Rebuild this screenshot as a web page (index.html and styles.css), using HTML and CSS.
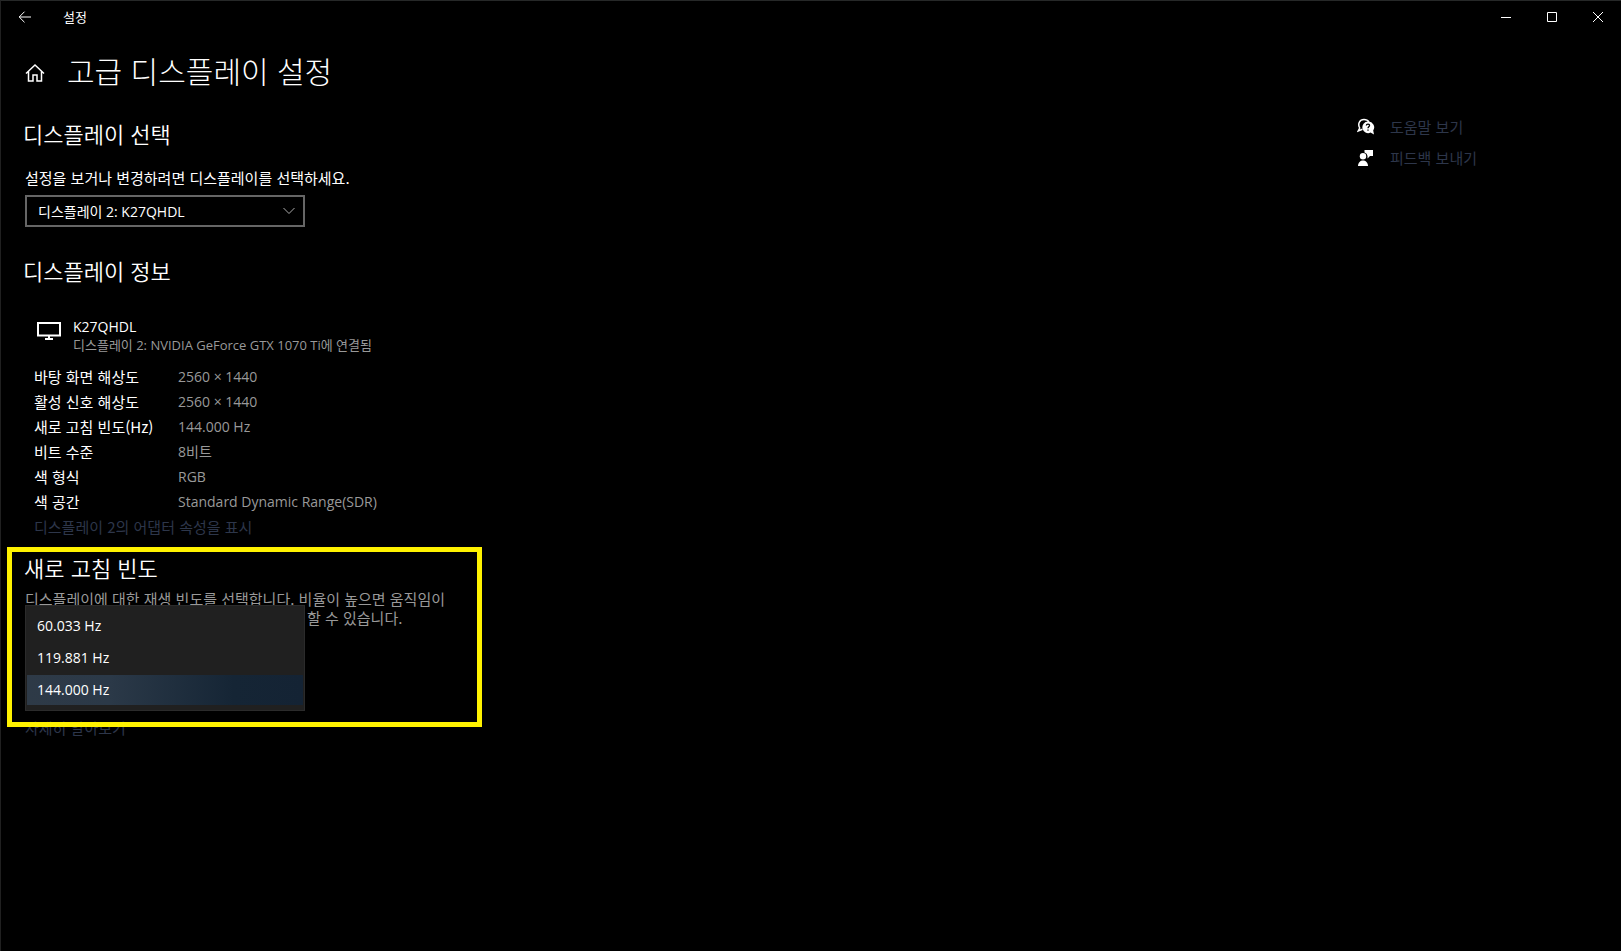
FILE: index.html
```html
<!DOCTYPE html>
<html lang="ko">
<head>
	<meta charset="UTF-8">
	<title>설정</title>
	<link rel="stylesheet" href="styles.css">
</head>
<body>

	<div class="window">
		<div class="titlebar">
			<button class="back" aria-label="뒤로">
				<svg width="14" height="12" viewBox="0 0 14 12"><path d="M6.5 .7L1.2 6l5.300 5.300M1.200 6H13"/></svg>
			</button>
			<span class="app-name">설정</span>
			<div class="controls">
				<button aria-label="최소화"><svg width="10" height="10" viewBox="0 0 10 10"><path d="M0 5.500h10"/></svg></button>
				<button aria-label="최대화"><svg width="10" height="10" viewBox="0 0 10 10"><path d="M.5.5h9v9h-9z"/></svg></button>
				<button aria-label="닫기"><svg width="10" height="10" viewBox="0 0 10 10"><path d="M0 0l10 10M10 0L0 10"/></svg></button>
			</div>
		</div>

		<header class="page-head">
			<a href="#" class="home" aria-label="홈">
				<svg width="20" height="20" viewBox="0 0 20 20"><path d="M1 10.500L10 2l9 8.500M3.500 8.500v9.500h4.500v-6h4v6h4.500V8.500"/></svg>
			</a>
			<h1>고급 디스플레이 설정</h1>
		</header>

		<div class="content">
			<main>
				<section class="pick">
					<h2>디스플레이 선택</h2>
					<label for="display">설정을 보거나 변경하려면 디스플레이를 선택하세요.</label>
					<div class="combo">
						<select id="display">
							<option>디스플레이 2: K27QHDL</option>
						</select>
						<svg class="chevron" width="12" height="8" viewBox="0 0 12 8"><path d="M.5 1L6 6.500 11.500 1"/></svg>
					</div>
				</section>

				<section class="info">
					<h2>디스플레이 정보</h2>
					<div class="device">
						<svg width="24" height="18" viewBox="0 0 24 18"><path d="M1 1h22v12.500H1zM12 13.500V17M8 17h8"/></svg>
						<div>
							<div class="name">K27QHDL</div>
							<div class="adapter">디스플레이 2: NVIDIA GeForce GTX 1070 Ti에 연결됨</div>
						</div>
					</div>
					<dl class="props">
						<dt>바탕 화면 해상도</dt><dd>2560 × 1440</dd>
						<dt>활성 신호 해상도</dt><dd>2560 × 1440</dd>
						<dt>새로 고침 빈도(Hz)</dt><dd>144.000 Hz</dd>
						<dt>비트 수준</dt><dd>8비트</dd>
						<dt>색 형식</dt><dd>RGB</dd>
						<dt>색 공간</dt><dd>Standard Dynamic Range(SDR)</dd>
					</dl>
					<a href="#" class="adapter-link">디스플레이 2의 어댑터 속성을 표시</a>
				</section>

				<section class="rate">
					<h2>새로 고침 빈도</h2>
					<p>디스플레이에 대한 재생 빈도를 선택합니다. 비율이 높으면 움직임이<br>더 부드럽게 표시되지만, 전원도 더 많이 사용 할 수 있습니다.</p>
					<div class="rate-field">
						<select size="3" class="popup" aria-label="새로 고침 빈도">
							<option>60.033 Hz</option>
							<option>119.881 Hz</option>
							<option selected>144.000 Hz</option>
						</select>
					</div>
				</section>
				<a href="#" class="more">자세히 알아보기</a>
			</main>

			<aside class="help">
				<a href="#">
					<svg width="18" height="18" viewBox="0 0 18 18">
						<path class="line" d="M5.500 11.200L1.200 13l1.500-3C.5 6 2.500 1.500 7 1.500c2.200 0 4 1 5 2.500"/>
						<path class="solid" d="M11 3.500a5.800 5.800 0 1 0 2.500 11.100L17 16.500l-.8-4A5.800 5.800 0 0 0 11 3.500z"/>
						<path class="mark" d="M9.300 7.500c.2-2 3.500-1.800 3.200.2-.2 1-1.500 1.200-1.500 2.500M11 11.500v1.300"/>
					</svg>
					<span>도움말 보기</span>
				</a>
				<a href="#">
					<svg width="18" height="18" viewBox="0 0 18 18">
						<path class="solid" d="M7.500 1H16v6h-3l-2.500 2.500V7A4 4 0 0 0 7.500 3.500z"/>
						<circle class="solid" cx="6" cy="7.200" r="3.200"/>
						<path class="solid" d="M1 17c0-7.500 10-7.500 10 0z"/>
					</svg>
					<span>피드백 보내기</span>
				</a>
			</aside>
		</div>
	</div>

</body>
</html>
```
FILE: styles.css
```css
*{
	margin: 0;
	padding: 0;
	box-sizing: border-box;
}
body{
	background: #000;
	color: #fff;
	font: 15px/20px "Noto Sans CJK KR", sans-serif;
}
a{
	color: #2d364a;
	text-decoration: none;
}
button{
	background: none;
	border: 0;
	color: #fff;
}
svg{
	display: block;
	flex: none;
	fill: none;
	stroke: currentColor;
}
h1{
	font-size: 30px;
	line-height: 40px;
	font-weight: 300;
}
h2{
	font-size: 22px;
	line-height: 30px;
	font-weight: 350;
}
.window{
	min-height: 100vh;
	border-top: 1px solid #262828;
	border-left: 1px solid #202020;
}

/* title bar */
.titlebar{
	display: flex;
	align-items: center;
	height: 32px;
}
.back{
	width: 48px;
	height: 32px;
	padding-left: 17px;
}
.app-name{
	margin-left: 14px;
	font-size: 13px;
}
.controls{
	display: flex;
	margin-left: auto;
}
.controls button{
	display: flex;
	align-items: center;
	justify-content: center;
	width: 46px;
	height: 32px;
}

.page-head{
	display: flex;
	align-items: center;
	gap: 22px;
	padding: 17px 24px 0;
}
.home{
	padding-top: 5px;
	color: #fff;
}
.home svg{
	stroke-width: 1.5;
}

.content{
	display: grid;
	grid-template-columns: 1fr 264px;
	padding-top: 21px;
}

/* display picker */
.pick{
	padding: 7px 24px 0 22px;
}
.pick label{
	display: block;
	margin: 20px 0 7px 2px;
}
.combo{
	position: relative;
	width: 280px;
	margin-left: 2px;
}
.combo select{
	display: block;
	width: 100%;
	height: 32px;
	padding-left: 11px;
	background: #000;
	border: 2px solid #666;
	color: #fff;
	font: 14px "Open Sans", "Noto Sans CJK KR", sans-serif;
	appearance: none;
}
.chevron{
	position: absolute;
	top: 12px;
	right: 10px;
	color: #aaa;
}

/* display info */
.info{
	padding: 28px 24px 0 22px;
}
.device{
	display: flex;
	gap: 12px;
	padding: 33px 0 0 14px;
	font-family: "Open Sans", "Noto Sans CJK KR", sans-serif;
}
.device svg{
	margin-top: 4px;
	stroke-width: 2;
}
.name{
	font-size: 14px;
	line-height: 18px;
}
.adapter{
	color: #999;
	font-size: 13px;
	line-height: 18px;
}
.props{
	display: grid;
	grid-template-columns: 144px 1fr;
	padding: 10px 0 0 11px;
	line-height: 25px;
}
.props dd{
	color: #999;
	font-size: 14px;
	font-family: "Open Sans", "Noto Sans CJK KR", sans-serif;
}
.adapter-link{
	display: block;
	padding-left: 11px;
	line-height: 25px;
}

/* refresh rate, highlighted */
.rate{
	position: relative;
	z-index: 1;
	width: 475px;
	margin: 8px 0 0 6px;
	padding: 0 13px 63px 12px;
	border: 5px solid #fff200;
}
.rate p{
	margin: 7px 0 0 1px;
	color: #999;
	line-height: 19px;
	white-space: nowrap;
}
.rate-field{
	position: relative;
	height: 32px;
	margin-left: 1px;
}
.popup{
	position: absolute;
	top: -22px;
	left: 0;
	width: 280px;
	height: 106px;
	padding: 5px 1px;
	background: #202020;
	border: 1px solid #2b2b2b;
	border-radius: 0;
	color: #fff;
	font: 14px/20px "Open Sans", "Noto Sans CJK KR", sans-serif;
	outline: 0;
	overflow: hidden;
	appearance: none;
}
.popup option{
	height: 30px;
	margin-bottom: 2px;
	padding: 5px 10px;
	color: #fff;
}
.popup option:checked{
	background: linear-gradient(90deg, #2e3a47, #2b3948 30%, #152535 75%, #142334);
	color: #fff;
}
.more{
	display: block;
	margin: -9px 0 0 24px;
}

/* help links */
.help a{
	display: flex;
	align-items: center;
	gap: 15px;
	height: 31px;
}
.help svg{
	color: #fff;
}
.help .solid{
	fill: #fff;
	stroke: none;
}
.help .line{
	stroke-width: 1.5;
}
.help .mark{
	stroke: #000;
	stroke-width: 1.3;
}
```
